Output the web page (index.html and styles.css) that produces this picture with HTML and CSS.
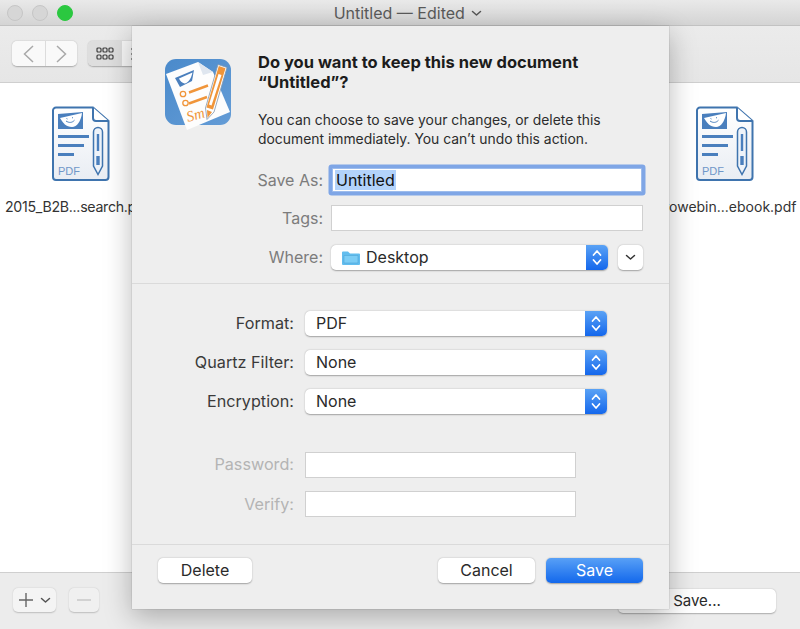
FILE: index.html
```html
<!DOCTYPE html>
<html lang="en">
<head>
<meta charset="utf-8">
<title>Untitled — Edited</title>
<link rel="stylesheet" href="styles.css">
</head>
<body>
<svg class="defs" width="0" height="0" aria-hidden="true">
  <defs>
    <linearGradient id="docfill" x1="0" y1="0" x2="0" y2="1">
      <stop offset="0" stop-color="#ffffff"/>
      <stop offset="1" stop-color="#e9edf3"/>
    </linearGradient>
    <symbol id="pdf" viewBox="0 0 58 76">
      <path d="M4 1.500H41L56.500 15V71a3 3 0 0 1-3 3H4a3 3 0 0 1-3-3V4.500a3 3 0 0 1 3-3z" fill="url(#docfill)" stroke="#3f74ae" stroke-width="2"/>
      <path d="M41 1.500V12a3 3 0 0 0 3 3H56.500" fill="#fff" stroke="#3f74ae" stroke-width="2"/>
      <path d="M6 8L31 6V23H6z" fill="#4a7fbd"/>
      <path d="M8 12L30 7C29 15 25 21 20 21C14 21 11 17 8 12z" fill="#fff"/>
      <path d="M14.500 12.500l1 .5M20 11.500l1 .5M14 15c3 2 6 2 8.500-.8" fill="none" stroke="#4a7fbd" stroke-width="1"/>
      <path d="M6 30.500H37M6 39.500H32M6 48.500H22" stroke="#4a7fbd" stroke-width="3"/>
      <path d="M41.500 26a4.500 4.500 0 0 1 9 0V60L46 68.500L41.500 60z" fill="#eef3f9" stroke="#3f74ae" stroke-width="1.500"/>
      <path d="M44.800 28h2.400v17h-2.400zM44.300 50h3.400v9h-3.400z" fill="#4a7fbd"/>
      <text class="pdf-word" x="6" y="69">PDF</text>
    </symbol>
    <symbol id="stepper" viewBox="0 0 22 25">
      <path d="M7.500 10L11 6l3.500 4M7.500 15l3.500 4 3.500-4" fill="none" stroke="#fff" stroke-width="1.700" stroke-linecap="round" stroke-linejoin="round"/>
    </symbol>
  </defs>
</svg>

<div class="window">
  <header class="titlebar">
    <div class="lights">
      <span class="light"></span>
      <span class="light"></span>
      <span class="light light-green"></span>
    </div>
    <div class="title">Untitled — Edited
      <svg class="title-chev" width="11" height="7" viewBox="0 0 11 7"><path d="M1.500 1.500L5.500 5l4-3.500" fill="none" stroke="#555" stroke-width="1.500" stroke-linecap="round" stroke-linejoin="round"/></svg>
    </div>
  </header>

  <div class="toolbar">
    <div class="nav">
      <span class="nav-btn">
        <svg width="13" height="20" viewBox="0 0 13 20"><path d="M11 2L2.500 10l8.500 8" fill="none" stroke="#a9a9a9" stroke-width="1.500"/></svg>
      </span>
      <span class="nav-btn">
        <svg width="13" height="20" viewBox="0 0 13 20"><path d="M2 2l8.500 8L2 18" fill="none" stroke="#a9a9a9" stroke-width="1.500"/></svg>
      </span>
    </div>
    <div class="views">
      <span class="view-btn view-on">
        <svg width="18" height="13" viewBox="0 0 18 13"><g fill="none" stroke="#3c3c3c" stroke-width="1.200"><rect x="1" y="1" width="4" height="4" rx="1"/><rect x="7" y="1" width="4" height="4" rx="1"/><rect x="13" y="1" width="4" height="4" rx="1"/><rect x="1" y="8" width="4" height="4" rx="1"/><rect x="7" y="8" width="4" height="4" rx="1"/><rect x="13" y="8" width="4" height="4" rx="1"/></g></svg>
      </span>
      <span class="view-btn">
        <svg width="18" height="14" viewBox="0 0 18 14"><path d="M1 2h16M1 7h16M1 12h16" stroke="#444" stroke-width="1.200"/></svg>
      </span>
    </div>
  </div>

  <main class="files">
    <figure class="file file-left">
      <svg class="file-icon" width="58" height="76"><use href="#pdf"/></svg>
      <figcaption>2015_B2B...search.pdf</figcaption>
    </figure>
    <figure class="file file-right">
      <svg class="file-icon" width="58" height="76"><use href="#pdf"/></svg>
      <figcaption>Growebin...ebook.pdf</figcaption>
    </figure>
  </main>

  <footer class="bottombar">
    <span class="small-btn add-btn">
      <svg width="16" height="16" viewBox="0 0 16 16"><path d="M8 1v14M1 8h14" stroke="#666" stroke-width="1.400"/></svg>
      <svg width="11" height="7" viewBox="0 0 11 7"><path d="M1.500 1.500L5.500 5l4-3.500" fill="none" stroke="#555" stroke-width="1.500" stroke-linecap="round" stroke-linejoin="round"/></svg>
    </span>
    <span class="small-btn minus-btn">
      <svg width="16" height="4" viewBox="0 0 16 4"><path d="M1 2h14" stroke="#c4c4c4" stroke-width="1.400"/></svg>
    </span>
    <span class="save-behind">Save...</span>
  </footer>
</div>

<section class="dialog">
  <div class="intro">
    <svg class="app-icon" width="66" height="72" viewBox="0 0 66 72">
      <defs>
        <linearGradient id="appblue" x1="0" y1="0" x2="1" y2="1">
          <stop offset="0" stop-color="#4a8acb"/>
          <stop offset="1" stop-color="#649cd6"/>
        </linearGradient>
      </defs>
      <rect x="0" y="0" width="66" height="66" rx="11" fill="url(#appblue)"/>
      <path d="M1 15L33 3L48 13L65 53L22 71z" fill="#fdfdfd"/>
      <path d="M33 3L48 13L38 16z" fill="#dfe6ef"/>
      <path d="M10 19L29 11L27 22L15 28z" fill="#4a7fbd"/>
      <path d="M14 19.500L27.500 13.500C26 20 23 24 19.500 24.500C17 24 15 22 14 19.500z" fill="#fff"/>
      <path d="M24 33.500L43 26.500M24 44.500L42 38" stroke="#f0953a" stroke-width="2.400"/>
      <circle cx="18" cy="35" r="2.700" fill="none" stroke="#f0953a" stroke-width="1.300"/>
      <circle cx="20.500" cy="44" r="2.700" fill="none" stroke="#f0953a" stroke-width="1.300"/>
      <text class="sign" x="23" y="63" transform="rotate(-16 23 63)">Sm</text>
      <path d="M53 5.500L62 8.500L49 53L42 60.500L40.500 49z" fill="#fff" stroke="#8395ab" stroke-width=".8"/>
      <path d="M53.800 7L60.500 9.300L48 50.500L41.500 48.500z" fill="#f0953a"/>
      <path d="M53.500 15L56.500 16L46.500 46.500L44 45.500z" fill="#fff"/>
      <path d="M42 51L47 53L42.500 59z" fill="#f0953a"/>
    </svg>
    <div class="intro-text">
      <h1>Do you want to keep this new document<br>“Untitled”?</h1>
      <p>You can choose to save your changes, or delete this<br>document immediately. You can’t undo this action.</p>
    </div>
  </div>

  <div class="upper">
    <div class="row row-saveas">
      <label class="lbl lbl-dim">Save As:</label>
      <div class="field field-focus"><span class="selected">Untitled</span></div>
    </div>
    <div class="row row-tags">
      <label class="lbl lbl-dim">Tags:</label>
      <div class="field"></div>
    </div>
    <div class="row row-where">
      <label class="lbl lbl-dim lbl-raised">Where:</label>
      <div class="where-controls">
        <div class="select where-select">
          <span class="select-value">
            <svg class="folder" width="20" height="16" viewBox="0 0 20 16"><path d="M1 2.500a1 1 0 0 1 1-1h5l2 2h9a1 1 0 0 1 1 1V14a1 1 0 0 1-1 1H2a1 1 0 0 1-1-1z" fill="#62bdee"/><path d="M3 5.500h14V13H3z" fill="#7ccdf5" stroke="#4ea6d8" stroke-width=".6"/></svg>
            Desktop
          </span>
          <span class="stepper"><svg width="22" height="25"><use href="#stepper"/></svg></span>
        </div>
        <span class="expand">
          <svg width="11" height="7" viewBox="0 0 11 7"><path d="M1.500 1.500L5.500 5l4-3.500" fill="none" stroke="#333" stroke-width="1.500" stroke-linecap="round" stroke-linejoin="round"/></svg>
        </span>
      </div>
    </div>
  </div>

  <div class="lower">
    <div class="row2 row2-first">
      <label class="lbl lbl-raised">Format:</label>
      <div class="select wide-select"><span class="select-value">PDF</span><span class="stepper"><svg width="22" height="25"><use href="#stepper"/></svg></span></div>
    </div>
    <div class="row2">
      <label class="lbl lbl-raised">Quartz Filter:</label>
      <div class="select wide-select"><span class="select-value">None</span><span class="stepper"><svg width="22" height="25"><use href="#stepper"/></svg></span></div>
    </div>
    <div class="row2">
      <label class="lbl lbl-raised">Encryption:</label>
      <div class="select wide-select"><span class="select-value">None</span><span class="stepper"><svg width="22" height="25"><use href="#stepper"/></svg></span></div>
    </div>
    <div class="row2 row2-password">
      <label class="lbl lbl-off lbl-raised">Password:</label>
      <div class="field field-off"></div>
    </div>
    <div class="row2 row2-verify">
      <label class="lbl lbl-off">Verify:</label>
      <div class="field field-off"></div>
    </div>
  </div>

  <div class="actions">
    <button class="btn btn-delete">Delete</button>
    <span class="actions-gap"></span>
    <button class="btn">Cancel</button>
    <button class="btn btn-primary">Save</button>
  </div>
</section>
</body>
</html>
```

FILE: styles.css
```css
* { box-sizing: border-box; }

html, body {
  margin: 0;
  height: 100%;
}

body {
  position: relative;
  overflow: hidden;
  background: #fff;
  color: #2a2a2a;
  font-family: Inter, "Liberation Sans", sans-serif;
  font-size: 16px;
}

.defs { position: absolute; }

.window {
  display: flex;
  flex-direction: column;
  height: 629px;
}

/* Title bar */
.titlebar {
  position: relative;
  flex: 0 0 26px;
  display: flex;
  align-items: center;
  justify-content: center;
  padding-left: 16px;
  background: linear-gradient(#e9e9e9, #d4d4d4);
  border-bottom: 1px solid #c2c2c2;
}

.lights {
  position: absolute;
  left: 7px;
  top: 5px;
  display: flex;
  gap: 9px;
}

.light {
  width: 16px;
  height: 16px;
  border-radius: 50%;
  background: #d6d6d6;
  border: 1px solid #c6c6c6;
}

.light-green {
  background: #2bc840;
  border-color: #2bc840;
}

.title {
  color: #5a5a5a;
  font-size: 16px;
  white-space: nowrap;
}

.title-chev { margin-left: 2px; vertical-align: 2px; }

/* Toolbar */
.toolbar {
  flex: 0 0 57px;
  display: flex;
  align-items: flex-start;
  gap: 11px;
  padding: 15px 0 0 12px;
  background: linear-gradient(#ebebeb, #e6e6e6);
  border-bottom: 1px solid #cfcfcf;
}

.nav, .views {
  display: flex;
  height: 25px;
  border-radius: 5px;
  box-shadow: 0 0.5px 1.5px rgba(0, 0, 0, 0.28);
  overflow: hidden;
}

.nav-btn {
  width: 32.500px;
  display: flex;
  align-items: center;
  justify-content: center;
  background: #f9f9f9;
}

.nav-btn + .nav-btn { border-left: 1px solid #dcdcdc; }

.view-btn {
  width: 34px;
  display: flex;
  align-items: center;
  justify-content: center;
  background: #f9f9f9;
}

.view-on { background: #dedede; }

/* Files */
.files {
  flex: 1;
  display: flex;
  justify-content: space-between;
  padding: 23px 0 0 5px;
  background: #fff;
  border-bottom: 1px solid #cfcfcf;
}

.file {
  margin: 0;
  display: flex;
  flex-direction: column;
  align-items: center;
  font-size: 14px;
  color: #333;
}

.file-left { width: 152px; }
.file-right { width: 150px; }

.file-left figcaption {
  align-self: flex-start;
  font-size: 14.200px;
  letter-spacing: -0.3px;
}

.file-icon { display: block; }

.file figcaption {
  margin-top: 16px;
  line-height: 18px;
  white-space: nowrap;
}

.pdf-word {
  font-family: "Liberation Sans", sans-serif;
  font-size: 11px;
  fill: #6f97c8;
}

/* Bottom bar */
.bottombar {
  flex: 0 0 56px;
  display: flex;
  align-items: flex-start;
  padding: 15px 24px 0 13px;
  background: #ececec;
}

.small-btn {
  height: 24px;
  display: flex;
  align-items: center;
  justify-content: center;
  border-radius: 5px;
  background: #f4f4f4;
  box-shadow: 0 0.5px 1.5px rgba(0, 0, 0, 0.2);
}

.add-btn { width: 43px; gap: 6px; }
.minus-btn { width: 30px; margin-left: 13px; background: #f0f0f0; }

.save-behind {
  margin-left: auto;
  margin-top: 1px;
  width: 158px;
  height: 24px;
  line-height: 24px;
  text-align: center;
  font-size: 15px;
  border-radius: 5px;
  background: #fff;
  box-shadow: 0 0.5px 1.5px rgba(0, 0, 0, 0.28);
}

/* Sheet */
.dialog {
  position: absolute;
  left: 132px;
  top: 26px;
  width: 537px;
  height: 583px;
  display: flex;
  flex-direction: column;
  background: #eeeeee;
  box-shadow: 0 0 1px rgba(0, 0, 0, 0.35), 0 8px 26px rgba(0, 0, 0, 0.28);
}

.intro {
  display: flex;
  align-items: flex-start;
  gap: 27px;
  height: 122px;
  padding: 26px 20px 0 33px;
}

.app-icon {
  flex: none;
  margin-top: 7px;
}

.intro-text { flex: 1; }

.intro h1 {
  margin: 0;
  font-size: 16.500px;
  font-weight: 700;
  line-height: 20px;
  color: #1c1c1c;
}

.intro p {
  margin: 19px 0 0;
  font-size: 13.900px;
  line-height: 19px;
  white-space: nowrap;
  color: #2c2c2c;
}

.upper {
  padding: 19px 26px 13px 0;
  border-bottom: 1px solid #dadada;
}

.row {
  display: grid;
  grid-template-columns: 191px 312px;
  column-gap: 8px;
  align-items: center;
  height: 26px;
}

.row-tags { margin-top: 12px; }
.row-where { margin-top: 14px; height: 25px; }

.lbl {
  text-align: right;
  white-space: nowrap;
  color: #3a3a3a;
}

.lbl-raised { padding-bottom: 2px; }
.lbl-dim { color: #7c7c7c; }
.lbl-off { color: #b4b4b4; }

.field {
  height: 26px;
  background: #fff;
  border: 1px solid #d0d0d0;
}

.field-focus {
  display: flex;
  align-items: center;
  padding-left: 2px;
  border-color: #9dbcec;
  box-shadow: 0 0 0 3.500px #7fa6e6;
  border-radius: 1px;
  height: 24px;
  margin: 1px 1px;
}

.selected {
  background: #b3d3fb;
  padding: 0 1px;
  line-height: 20px;
  color: #111;
}

.where-controls {
  display: flex;
  justify-content: space-between;
}

.select {
  display: flex;
  height: 25px;
  background: #fff;
  border-radius: 5px;
  box-shadow: 0 0.5px 1.5px rgba(0, 0, 0, 0.32);
  overflow: hidden;
}

.where-select { width: 277px; }
.wide-select { width: 302px; }

.select-value {
  flex: 1;
  display: flex;
  align-items: center;
  gap: 5px;
  padding: 0 0 2px 11px;
}

.folder { margin: 2px 0 0 -1px; }

.stepper {
  flex: 0 0 22px;
  background: linear-gradient(#5aa2f5, #1467ec);
}

.stepper svg { display: block; }

.expand {
  width: 25px;
  height: 25px;
  display: flex;
  align-items: center;
  justify-content: center;
  background: #fff;
  border-radius: 5px;
  box-shadow: 0 0.5px 1.5px rgba(0, 0, 0, 0.32);
}

.lower {
  flex: 1;
  padding-top: 27px;
  border-bottom: 1px solid #dadada;
}

.row2 {
  display: grid;
  grid-template-columns: 162px 302px;
  column-gap: 11px;
  align-items: center;
  height: 25px;
  margin-top: 14px;
}

.row2 .lbl { font-size: 16.200px; }

.row2-first { margin-top: 0; }
.row2-password { margin-top: 38px; height: 26px; }
.row2-verify { margin-top: 13px; height: 26px; }

.field-off { width: 271px; }

.actions {
  flex: 0 0 64px;
  display: flex;
  align-items: flex-start;
  gap: 11px;
  padding: 13px 26px 0;
}

.actions-gap { flex: 1; }

.btn {
  width: 97px;
  height: 25px;
  padding: 0 0 2px;
  border: 0;
  border-radius: 5px;
  background: #fff;
  color: #2a2a2a;
  font: inherit;
  box-shadow: 0 0.5px 1.5px rgba(0, 0, 0, 0.32);
}

.btn-delete { width: 94px; }

.btn-primary {
  color: #fff;
  background: linear-gradient(#58a0f6, #1368ec);
}

.sign {
  font-family: "Liberation Serif", serif;
  font-style: italic;
  font-size: 15px;
  fill: #f0953a;
}
```
